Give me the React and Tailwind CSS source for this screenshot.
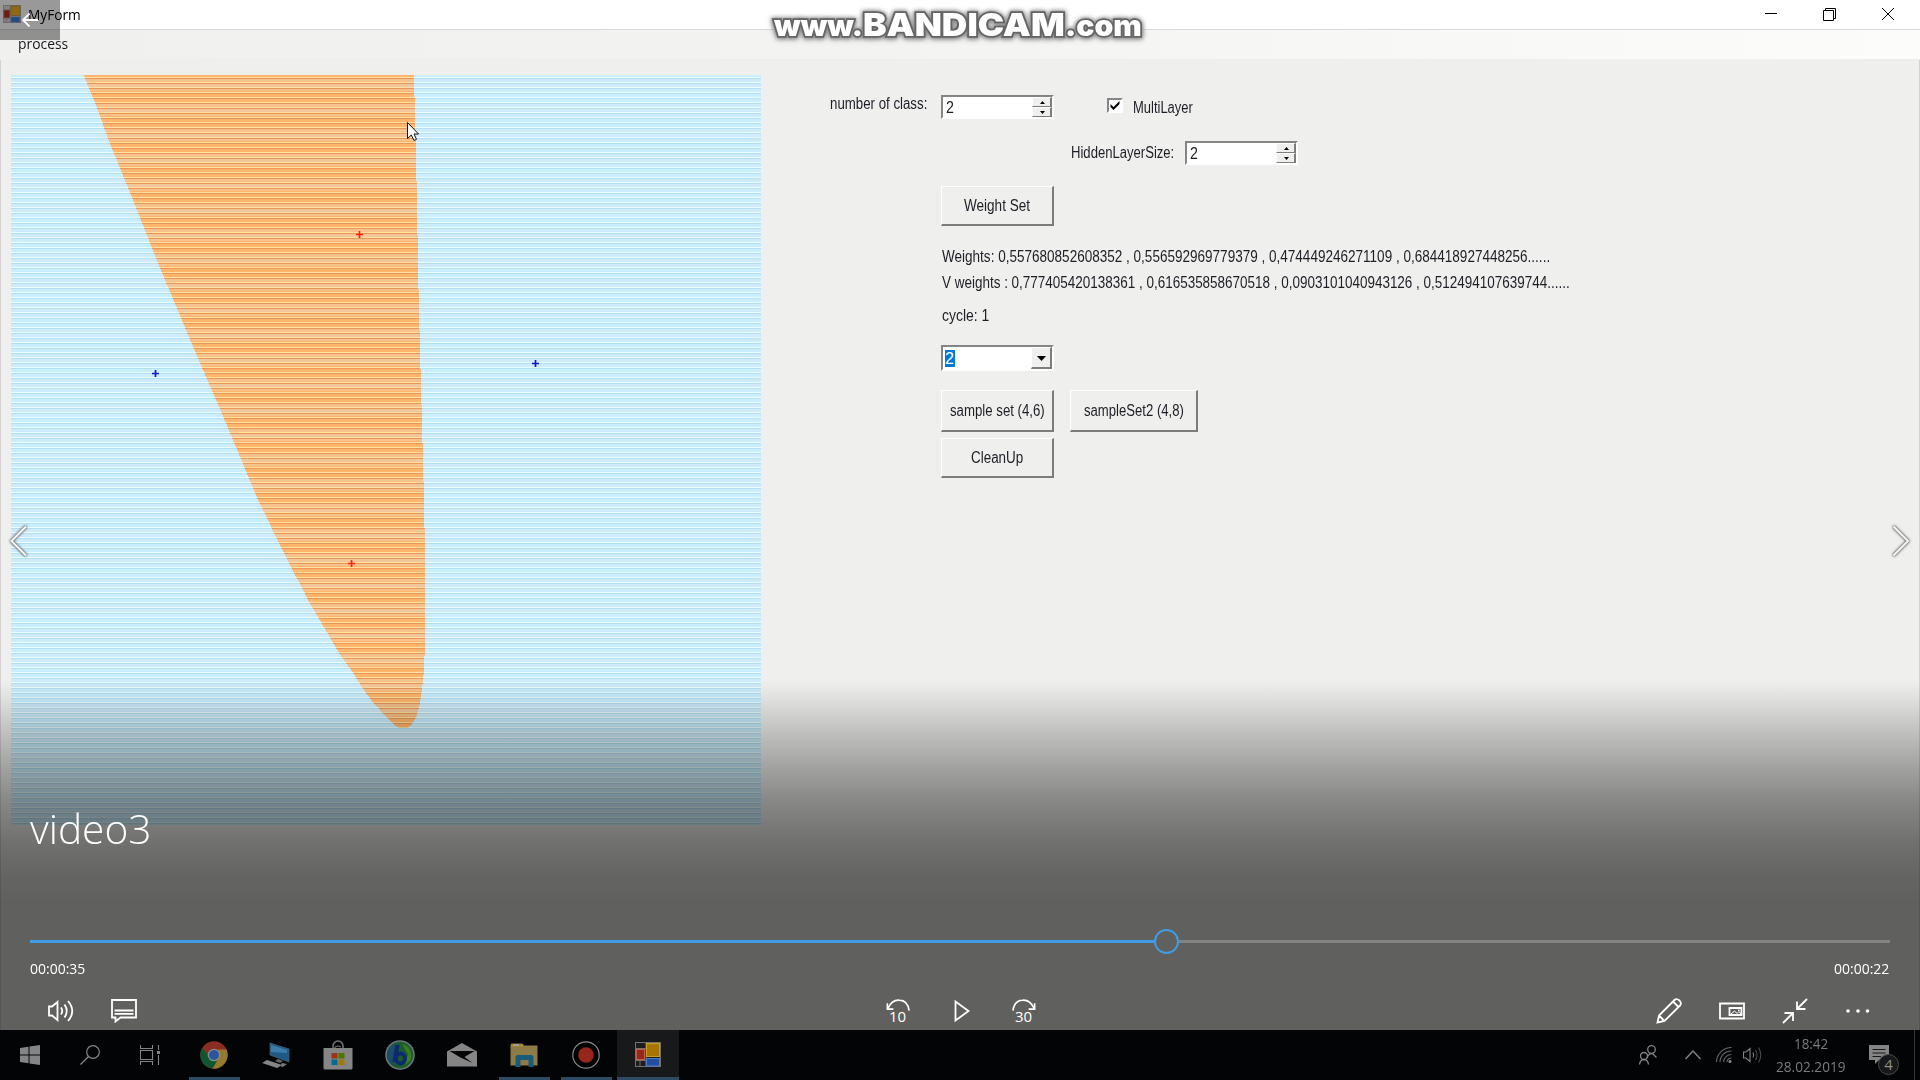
import React, { useLayoutEffect, useRef, useState } from "react";

/* Single line of text squeezed or stretched to an exact width */
function Fit({ w, className = "", children }) {
  const ref = useRef(null);
  const [k, setK] = useState(1);
  useLayoutEffect(() => {
    setK(w / ref.current.offsetWidth);
  }, [w]);
  return (
    <span className="flex shrink-0 whitespace-pre" style={{ width: w }}>
      <span ref={ref} className={`block shrink-0 origin-left ${className}`} style={{ transform: `scaleX(${k})` }}>
        {children}
      </span>
    </span>
  );
}

const formText = "font-['Liberation_Sans',sans-serif] text-[16px] leading-[20px] text-[#1e1e26]";
const uiText = "font-['Open_Sans','Noto_Sans',sans-serif]";

const dimPalette = { bg: "#1d1d1d", line: "#77716c", red: "#96271b", redLine: "#c2604c", gold: "#a57600", goldLine: "#c79d2c", blue: "#244fa0", blueLine: "#4f7cc6" };
const litPalette = { bg: "#d8d8d8", line: "#aaa6a2", red: "#b92d1f", redLine: "#a86055", gold: "#efb11d", goldLine: "#b08a2c", blue: "#3f7fd8", blueLine: "#8fa8cc" };

function FormIcon({ className, p = dimPalette }) {
  return (
    <svg viewBox="0 0 26 25" preserveAspectRatio="none" className={className}>
      <rect x="0.5" y="0.5" width="25" height="24" fill={p.bg} stroke={p.line} />
      <path d="M0 6.500H11M0 18.500H26M5 18V25M11 0V25" stroke={p.line} />
      <rect x="1.500" y="7.500" width="8" height="10" fill={p.red} stroke={p.redLine} />
      <rect x="11.500" y="1.500" width="13" height="13" fill={p.gold} stroke={p.goldLine} />
      <rect x="11.500" y="16.500" width="13" height="7.500" fill={p.blue} stroke={p.blueLine} />
    </svg>
  );
}

function NumberBox() {
  return (
    <div className="flex h-[24px] w-[113px] shrink-0 border-2 border-t-[#858585] border-l-[#858585] border-r-white border-b-white bg-white">
      <div className="flex flex-1 items-center pl-[3px] pt-px">
        <Fit w={8} className={formText}>2</Fit>
      </div>
      <div className="flex w-[20px] flex-col">
        {["M2.500 0L5 3H0z", "M0 0H5L2.500 3z"].map((d) => (
          <div key={d} className="flex flex-1 items-center justify-center border border-t-white border-l-white border-r-[#7d7d7d] border-b-[#7d7d7d] border-r-2 bg-[#efefed]">
            <svg viewBox="0 0 5 3" className="mt-px ml-px h-[3px] w-[5px]"><path d={d} fill="#000" /></svg>
          </div>
        ))}
      </div>
    </div>
  );
}

function Button({ w, h, tw, children }) {
  return (
    <div
      className="flex shrink-0 items-center justify-center border border-t-white border-l-white border-r-2 border-b-2 border-r-[#7c7c7c] border-b-[#7c7c7c] bg-[#efefed]"
      style={{ width: w, height: h }}
    >
      <Fit w={tw} className={formText}>{children}</Fit>
    </div>
  );
}

function Canvas() {
  return (
    <svg viewBox="11 75 750 750" className="mt-[15px] ml-[11px] h-[750px] w-[750px] shrink-0" shapeRendering="crispEdges">
      <defs>
        <pattern id="blue" width="750" height="5" patternUnits="userSpaceOnUse">
          <rect width="750" height="5" fill="#c8eeff" />
          <rect y="2" width="750" height="1" fill="#eafdff" />
          <rect y="3" width="750" height="1" fill="#b3dfee" />
        </pattern>
        <pattern id="orange" width="750" height="5" patternUnits="userSpaceOnUse">
          <rect width="750" height="5" fill="#ffb66c" />
          <rect y="2" width="750" height="1" fill="#ffe2a0" />
          <rect y="3" width="750" height="1" fill="#e8965a" />
        </pattern>
        <pattern id="bands" width="750" height="25" patternUnits="userSpaceOnUse">
          <rect y="4" width="750" height="3" fill="#dce2f0" opacity="0.25" />
          <rect y="9" width="750" height="3" fill="#dce2f0" opacity="0.35" />
          <rect y="14" width="750" height="2" fill="#dce2f0" opacity="0.25" />
        </pattern>
      </defs>
      <rect x="11" y="75" width="750" height="750" fill="url(#blue)" />
      <path
        d="M83.500 75L96 105L109 141L133 200L160 268L194 349L223 416L258 500L286 557L308 600L339 653L353 673Q368 698 380 710Q390 722 398 727.500H408Q413 725 417 715Q421.500 700 423.500 675L425 647V555L424 500L422 423L420 350L418 268L417 200L415.500 140L414 75z"
        fill="url(#orange)"
      />
      <rect x="11" y="75" width="750" height="750" fill="url(#bands)" />
      <g shapeRendering="auto" strokeWidth="1.700">
        <path d="M356 234.500h7M359.500 231v7M348 563.500h7M351.500 560v7" stroke="#fb2410" />
        <path d="M152 373.500h7M155.500 370v7M532 363.500h7M535.500 360v7" stroke="#1018c0" />
        <path
          d="M407.500 122.500V138.500L411.300 135L414 140.500L416.500 139.300L414 134H418.500z"
          fill="#fff" stroke="#111" strokeWidth="1"
        />
      </g>
    </svg>
  );
}

function Panel() {
  return (
    <div className="flex flex-1 flex-col pt-[35px]">
      <div className="flex h-[46px] items-start">
        <div className="ml-[69px] mt-[-1px] w-[111px]"><Fit w={97} className={formText}>number of class:</Fit></div>
        <NumberBox />
        <div className="ml-[53px] mt-[3px] flex h-[15px] w-[16px] items-center justify-center border-2 border-t-[#858585] border-l-[#858585] border-r-white border-b-white bg-white">
          <svg viewBox="0 0 10 9" className="h-[9px] w-[10px]"><path d="M0.500 3V6L3.500 9L9.500 3V0L3.500 6z" fill="#000" /></svg>
        </div>
        <div className="ml-[10px] mt-[3px]"><Fit w={60} className={formText}>MultiLayer</Fit></div>
      </div>
      <div className="flex h-[45px] items-start">
        <div className="ml-[310px] mt-[2px] w-[114px]"><Fit w={103} className={formText}>HiddenLayerSize:</Fit></div>
        <NumberBox />
      </div>
      <div className="ml-[180px] flex flex-col">
        <Button w={113} h={40} tw={66}>Weight Set</Button>
        <div className="mt-[21px] ml-px flex flex-col">
          <Fit w={608} className={formText}>Weights: 0,557680852608352 , 0,556592969779379 , 0,474449246271109 , 0,684418927448256......</Fit>
        </div>
        <div className="mt-[6px] ml-px flex flex-col">
          <Fit w={628} className={formText}>V weights : 0,777405420138361 , 0,616535858670518 , 0,0903101040943126 , 0,512494107639744......</Fit>
        </div>
        <div className="mt-[13px] ml-px flex flex-col">
          <Fit w={47} className={formText}>cycle: 1</Fit>
        </div>
        <div className="mt-[19px] flex h-[26px] w-[113px] border-2 border-t-[#858585] border-l-[#858585] border-r-white border-b-white bg-white">
          <div className="flex flex-1 items-center pl-[2px]">
            <div className="h-[17px] w-[10px] bg-[#0078d7]">
              <Fit w={9} className="font-['Liberation_Sans',sans-serif] text-[16px] leading-[17px] text-white">2</Fit>
            </div>
          </div>
          <div className="flex w-[21px] items-center justify-center border border-t-white border-l-white border-r-2 border-b-2 border-r-[#7d7d7d] border-b-[#7d7d7d] bg-[#efefed]">
            <svg viewBox="0 0 9 5" className="mt-[2px] h-[5px] w-[9px]"><path d="M0 0H9L4.500 5z" fill="#000" /></svg>
          </div>
        </div>
        <div className="mt-[19px] flex gap-[16px]">
          <Button w={113} h={42} tw={95}>sample set (4,6)</Button>
          <Button w={128} h={42} tw={100}>sampleSet2 (4,8)</Button>
        </div>
        <div className="mt-[6px] flex"><Button w={113} h={40} tw={52}>CleanUp</Button></div>
      </div>
    </div>
  );
}

function TaskIcon({ w, open, active, children }) {
  return (
    <div className={`flex h-[50px] shrink-0 flex-col items-center ${active ? "bg-[#17191b]" : ""}`} style={{ width: w }}>
      <div className="flex h-[47px] items-center pt-[3px]">{children}</div>
      {open && <div className={`h-[3px] bg-[#2f4a63] ${active ? "w-full" : "w-[51px]"}`} />}
    </div>
  );
}

function Taskbar() {
  return (
    <div className="relative flex h-[50px] bg-[#020406] text-[#7c7c7c]">
      <TaskIcon w={60}>
        <svg viewBox="0 0 20 20" className="h-[20px] w-[20px]"><path d="M0 3L8.500 1.700V9.500H0zM9.500 1.500L20 0V9.500H9.500zM0 10.500H8.500V18.300L0 17zM9.500 10.500H20V20L9.500 18.500z" fill="#858585" /></svg>
      </TaskIcon>
      <TaskIcon w={60}>
        <svg viewBox="0 0 20 20" className="h-[20px] w-[20px]" fill="none" stroke="#858585" strokeWidth="1.200"><circle cx="13" cy="7" r="6.300" /><path d="M8.500 11.500L0.500 19.500" /></svg>
      </TaskIcon>
      <TaskIcon w={60}>
        <svg viewBox="0 0 20 20" className="h-[20px] w-[20px]" fill="none" stroke="#858585" strokeWidth="1.100"><path d="M0.500 0V3.500H12.500V0M0.500 20V16.500H12.500V20M0.500 5.500H12.500V14.500H0.500zM18.500 0V5M18.500 10V20" /><rect x="17" y="6" width="3" height="3" fill="#858585" stroke="none" /></svg>
      </TaskIcon>
      <div className="w-[3px]" />
      <TaskIcon w={62} open>
        <svg viewBox="0 0 28 28" className="h-[28px] w-[28px]">
          <circle cx="14" cy="14" r="13.700" fill="#8a2e22" />
          <path d="M2.200 7A13.700 13.700 0 0 0 12.500 27.600L19 17.500L14 14L8 14z" fill="#0e5730" />
          <path d="M26.500 8.500A13.700 13.700 0 0 1 12.500 27.600L19.500 16L18 8.500z" fill="#96792a" />
          <circle cx="14" cy="14" r="6.300" fill="#8c8c8c" /><circle cx="14" cy="14" r="5" fill="#2c55a0" />
        </svg>
      </TaskIcon>
      <TaskIcon w={62}>
        <svg viewBox="0 0 28 28" className="h-[28px] w-[28px]">
          <path d="M8 2L27 8V21L8 14z" fill="#1e5a85" stroke="#52616b" strokeWidth="0.700" /><path d="M9 4L25 9V12L9 11z" fill="#3a7dad" />
          <path d="M16 18L21 20L18 22L13 20z" fill="#60666b" /><path d="M0 22L5 19L20 24L15 27z" fill="#858585" /><path d="M20 22l5 1-4 3-3-1z" fill="#777" />
        </svg>
      </TaskIcon>
      <TaskIcon w={61}>
        <svg viewBox="0 0 30 30" className="h-[30px] w-[30px]">
          <path d="M10 9V6a5 5 0 0 1 10 0V9" fill="none" stroke="#777" strokeWidth="1.500" /><path d="M12 9V7a5 5 0 0 1 6 0" fill="none" stroke="#777" />
          <path d="M0.500 8H29.500V28a1.500 1.500 0 0 1-1.500 1.500H2A1.500 1.500 0 0 1 0.500 28z" fill="#858585" />
          <path d="M8.500 13h6v5.500h-6z" fill="#9a3417" /><path d="M15.500 13h6v5.500h-6z" fill="#4f7400" /><path d="M8.500 19.500h6V25h-6z" fill="#006a99" /><path d="M15.500 19.500h6V25h-6z" fill="#a37800" />
        </svg>
      </TaskIcon>
      <TaskIcon w={63}>
        <svg viewBox="0 0 30 30" className="h-[30px] w-[30px]">
          <circle cx="15" cy="15" r="14" fill="#1c5c2c" stroke="#697579" strokeWidth="1.600" />
          <path d="M2 14A13 13 0 0 1 11 3L9 26A13 13 0 0 1 2 14z" fill="#1d4c68" /><path d="M17 4A12 12 0 0 1 25 21L20 25L23 14z" fill="#3d7d25" />
          <path d="M12.500 5L9.500 22" fill="none" stroke="#0c2a70" strokeWidth="4.200" />
          <ellipse cx="15.500" cy="18.500" rx="4.500" ry="5" fill="none" stroke="#0c2a70" strokeWidth="3.800" />
        </svg>
      </TaskIcon>
      <TaskIcon w={62}>
        <svg viewBox="0 0 30 24" className="h-[24px] w-[30px]"><path d="M0 8.500L15 0L30 8.500V23.500H0z" fill="#858585" /><path d="M2.500 8H27.500L17.500 14L25.500 20L13.500 14.500z" fill="#050607" /></svg>
      </TaskIcon>
      <TaskIcon w={62} open>
        <svg viewBox="0 0 28 24" className="h-[24px] w-[28px]">
          <path d="M0.500 2L1.500 0.500H12L14 2.500H27.500V22.500H0.500z" fill="#8e7c47" /><path d="M1 1H13V4H1z" fill="#a5842b" /><path d="M3 1H9V3H3z" fill="#a1a19b" />
          <path d="M5.500 24V13.500L7 12H22L23.500 13.500V24H18.500V17H10.500V24z" fill="#195c78" />
        </svg>
      </TaskIcon>
      <TaskIcon w={62} open>
        <svg viewBox="0 0 28 28" className="h-[28px] w-[28px]"><circle cx="14" cy="14" r="13.200" fill="#020202" stroke="#8b8b8b" strokeWidth="1.200" /><circle cx="14" cy="14" r="7.800" fill="#98261a" /></svg>
      </TaskIcon>
      <TaskIcon w={62} open active><FormIcon className="-mt-[1px] h-[25px] w-[26px]" /></TaskIcon>

      <div className="ml-auto flex h-[50px] items-center">
        <svg viewBox="0 0 18 20" className="mr-[28px] h-[20px] w-[18px]" fill="none" stroke="#858585" strokeWidth="1.300"><circle cx="12.500" cy="4.500" r="3.800" /><path d="M8 13C9 9 12 8 14 9L17.500 12.500" /><circle cx="5" cy="11" r="3.500" /><path d="M0.500 19.500C1 16 3 14.500 5 14.500S9 16 9.500 19.500" /></svg>
        <svg viewBox="0 0 16 10" className="mr-[15px] h-[10px] w-[16px]" fill="none" stroke="#858585" strokeWidth="1.400"><path d="M0.500 9L8 1L15.500 9" /></svg>
        <svg viewBox="0 0 16 16" className="mr-[11px] h-[16px] w-[16px]" fill="none" stroke="#666" strokeWidth="1.100"><path d="M0.500 15A15 15 0 0 1 15.500 0.500M4 15A11 11 0 0 1 15.500 4M7.500 15A8 8 0 0 1 15.500 7.500M11 15A4.500 4.500 0 0 1 15.500 11" /><circle cx="14" cy="14.500" r="1.500" fill="#888" stroke="none" /></svg>
        <svg viewBox="0 0 20 18" className="mr-[13px] h-[18px] w-[20px]" fill="none" stroke="#858585" strokeWidth="1.100"><path d="M0.500 6H3L7 2.500V15.500L3 12H0.500z" /><path d="M10 6.500Q11.500 9 10 11.500" /><path d="M12.500 4Q15.500 9 12.500 14M15.500 1.500Q20 9 15.500 16.500" stroke="#4b4b4b" /></svg>
        <div className={`flex w-[70px] flex-col items-center pb-[1px] ${uiText} text-[15px] leading-[23px]`}>
          <Fit w={34}>18:42</Fit>
          <Fit w={70}>28.02.2019</Fit>
        </div>
        <div className="relative ml-[23px] h-[22px] w-[45px]">
          <svg viewBox="0 0 20 22" className="h-[22px] w-[20px]"><path d="M0 1H20V16H10L6 20V16H0z" fill="#858585" /><path d="M3.500 5.500H16.500M3.500 9H16.500M3.500 12.500H12" stroke="#15171a" /></svg>
          <span className={`absolute top-[10px] left-[9px] flex h-[21px] w-[21px] items-center justify-center rounded-full border border-[#4a4a4a] bg-[#171819] text-[15px] text-[#8f8f8f] ${uiText}`}>4</span>
        </div>
        <div className="mr-[5px] h-[50px] w-px bg-[#353535]" />
      </div>
    </div>
  );
}

function Watermark() {
  return (
    <div
      className="absolute top-[5px] left-[774px] flex items-baseline font-['Inter','Roboto',sans-serif] leading-[40px] font-black text-white [-webkit-text-stroke:3.5px_#656565] [paint-order:stroke_fill] [filter:drop-shadow(0_0_2px_#888)_drop-shadow(0_1px_2px_#999)]"
    >
      <Fit w={89} className="text-[29px] leading-[40px]">www.</Fit>
      <Fit w={202} className="text-[32px] leading-[40px]">BANDICAM</Fit>
      <Fit w={77} className="text-[29px] leading-[40px]">.com</Fit>
    </div>
  );
}

function Ctl({ children }) {
  return <div className="flex h-[48px] w-[63px] items-center justify-center">{children}</div>;
}

function Skip({ n, flip }) {
  return (
    <div className="flex h-[24px] w-[26px] flex-col items-center">
      <svg viewBox="0 0 26 13" className={`h-[12px] w-[26px] shrink-0 ${flip ? "-scale-x-100" : ""}`} fill="none" stroke="#fff" strokeWidth="1.800"><path d="M1.500 4.500V11H8M1.800 10.800C5 3.500 10 1 14.500 1.300C20 1.500 24 5.500 25 12.500" /></svg>
      <span className={`-mt-[2px] ${uiText} text-[15px] leading-[14px] text-white`}><Fit w={17}>{n}</Fit></span>
    </div>
  );
}

function Player() {
  const ic = { fill: "none", stroke: "#fff", strokeWidth: 1.8 };
  return (
    <div className="absolute inset-x-0 top-0 bottom-[50px] flex flex-col">
      <div className="flex h-[40px] w-[60px] items-center justify-center bg-black/40">
        <svg viewBox="0 0 16 14" className="h-[14px] w-[16px]" {...ic}><path d="M0.800 7H16M7.500 0.500L1 7L7.500 13.500" /></svg>
      </div>
      <div className="mt-[485px] flex justify-between px-[9px]">
        {["M17 1.500L2.500 16L17 30.500", "M2.500 1.500L17 16L2.500 30.500"].map((d) => (
          <svg key={d} viewBox="0 0 20 32" className="h-[32px] w-[20px] [filter:drop-shadow(0_0_1px_#666)_drop-shadow(0_0_1px_#777)]" fill="none" stroke="#f5f5f5" strokeWidth="2"><path d={d} /></svg>
        ))}
      </div>
      <div className="mt-auto flex h-[350px] flex-col bg-[linear-gradient(to_bottom,rgba(0,0,0,0)_0px,rgba(0,0,0,0.05)_15px,rgba(0,0,0,0.2)_53px,rgba(0,0,0,0.32)_87px,rgba(0,0,0,0.43)_120px,rgba(0,0,0,0.53)_162px,rgba(0,0,0,0.58)_195px,rgba(0,0,0,0.6)_225px)]">
        <div className={`mt-[120px] ml-[30px] ${uiText} text-[41px] leading-[56px] font-light text-white`}><Fit w={121}>video3</Fit></div>
        <div className="mx-[30px] mt-[73px] flex h-[26px] items-center">
          <div className="h-[3px] w-[1124px] bg-[#419ce5]" />
          <div className="h-[25px] w-[25px] rounded-full border-2 border-[#419ce5]" />
          <div className="h-[3px] flex-1 bg-[#848484]" />
        </div>
        <div className={`mr-[31px] ml-[30px] mt-[4px] flex justify-between ${uiText} text-[15px] leading-[20px] text-white`}>
          <Fit w={55}>00:00:35</Fit>
          <Fit w={55}>00:00:22</Fit>
        </div>
        <div className="mr-[31px] ml-[29px] mt-[9px] grid grid-cols-3">
          <div className="flex">
            <Ctl><svg viewBox="0 0 26 22" className="h-[22px] w-[26px]" {...ic}><path d="M1 6.500H4L9.500 2V20L4 15.500H1z" /><path d="M13 7.500Q15.500 11 13 14.500M16.500 4.500Q21 11 16.500 17.500M20 1Q28.500 11 20 21" /></svg></Ctl>
            <Ctl><svg viewBox="0 0 26 24" className="h-[24px] w-[26px]" {...ic}><path d="M1 1H25V18.500H9.500L4.500 22.500V18.500H1zM3.500 11.500H22.500M3.500 14.800H22.500" /></svg></Ctl>
          </div>
          <div className="flex justify-center pl-[3px]">
            <Ctl><Skip n="10" /></Ctl>
            <Ctl><svg viewBox="0 0 16 22" className="ml-[2px] h-[22px] w-[16px]" {...ic}><path d="M1.500 1.500V20.500L14.500 11z" /></svg></Ctl>
            <Ctl><Skip n="30" flip /></Ctl>
          </div>
          <div className="flex justify-end">
            <Ctl><svg viewBox="0 0 26 26" className="h-[26px] w-[26px]" {...ic}><path d="M1.500 24.500L3 17.500L18.500 2Q20.500 0 23.500 2.500Q26 5.500 24 7.500L8.500 23zM3 17.500L8.500 23M17 3.500L22.500 9" /></svg></Ctl>
            <Ctl><svg viewBox="0 0 26 18" className="h-[18px] w-[26px]" {...ic}><path d="M1 1.500H25V16.500H1z" /><path d="M10.500 6H22.500V13H10.500z" /><path d="M12 12L15.500 9L18 11.500L20 9.500L22 12" strokeWidth="1" /><rect x="19" y="7.500" width="1.500" height="1.500" fill="#fff" stroke="none" /></svg></Ctl>
            <Ctl><svg viewBox="0 0 26 26" className="h-[26px] w-[26px]" {...ic}><path d="M25 1L15 11M15 3.500V11H23.500M1 25L11 15M2.500 15H11V23" /></svg></Ctl>
            <Ctl><svg viewBox="0 0 24 4" className="h-[4px] w-[24px]" fill="#fff"><circle cx="2" cy="2" r="1.800" /><circle cx="12" cy="2" r="1.800" /><circle cx="21.500" cy="2" r="1.800" /></svg></Ctl>
          </div>
        </div>
      </div>
    </div>
  );
}

export default function App() {
  return (
    <div className="relative flex h-[1080px] w-[1920px] flex-col overflow-hidden bg-[#efefed]">
      <div className="flex h-[30px] shrink-0 items-start border-b border-[#d9d9d8] bg-white">
        <FormIcon p={litPalette} className="mt-[5px] ml-[3px] h-[18px] w-[18px]" />
        <div className={`mt-[4px] ml-[7px] ${uiText} text-[15px] leading-[21px] text-black`}><Fit w={53}>MyForm</Fit></div>
        <svg viewBox="0 0 130 14" className="mt-[7px] mr-[25px] ml-auto h-[14px] w-[130px]" fill="none" stroke="#000" strokeWidth="1">
          <path d="M0 6.500H12M58.500 3.500H68.500V13.500H58.500zM60.500 3V1.500H70.500V11.500H69M117 1L129 13M129 1L117 13" />
        </svg>
      </div>
      <div className={`flex h-[30px] shrink-0 items-center border-b border-[#eeeeec] bg-[linear-gradient(to_right,#f0f0ee,#f3f3f2_45%,#fcfcfb)] pb-[2px] pl-[18px] ${uiText} text-[15px] text-[#18181c]`}>
        <Fit w={50}>process</Fit>
      </div>
      <div className="flex min-h-0 flex-1 border-x border-[#d4d4d3]">
        <div className="-ml-px flex flex-1"><Canvas /><Panel /></div>
      </div>
      <Taskbar />
      <Watermark />
      <Player />
    </div>
  );
}
